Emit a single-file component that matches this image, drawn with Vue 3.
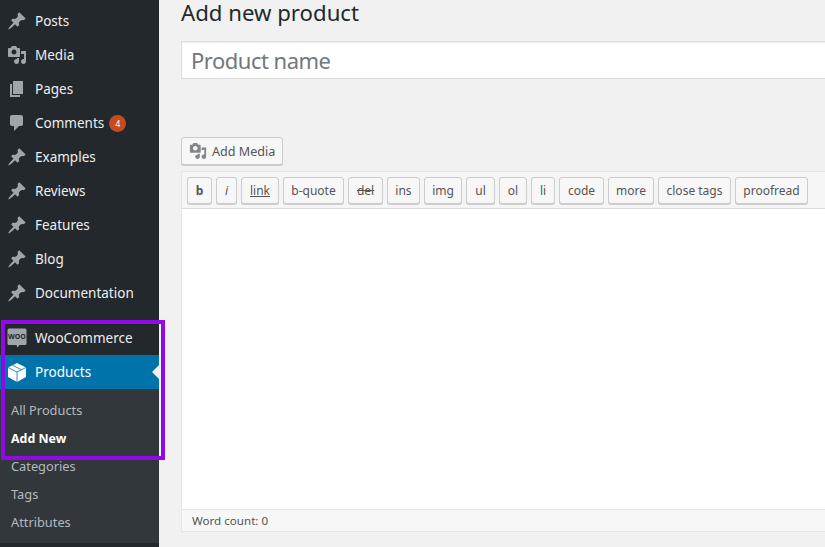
<script setup>
const items = [
  { label: 'Posts', icon: 'pin' }, { label: 'Media', icon: 'media' }, { label: 'Pages', icon: 'pages' },
  { label: 'Comments', icon: 'comment', badge: 4 }, { label: 'Examples', icon: 'pin' }, { label: 'Reviews', icon: 'pin' },
  { label: 'Features', icon: 'pin' }, { label: 'Blog', icon: 'pin' }, { label: 'Documentation', icon: 'pin' },
]
const sub = [
  { label: 'All Products' }, { label: 'Add New', current: true }, { label: 'Categories' }, { label: 'Tags' }, { label: 'Attributes' },
]
const tools = [
  { t: 'b', w: 25, c: 'bold' }, { t: 'i', w: 21, c: 'ital' }, { t: 'link', w: 38, c: 'under' }, { t: 'b-quote', w: 61 },
  { t: 'del', w: 35, c: 'strike' }, { t: 'ins', w: 33 }, { t: 'img', w: 38 }, { t: 'ul', w: 29 }, { t: 'ol', w: 28 },
  { t: 'li', w: 24 }, { t: 'code', w: 45 }, { t: 'more', w: 46 }, { t: 'close tags', w: 73 }, { t: 'proofread', w: 73 },
]
const mediaPath = 'M13 11V4c0-.55-.45-1-1-1h-1.670L9 1H5L3.670 3H2c-.55 0-1 .45-1 1v7c0 .55.45 1 1 1h10c.55 0 1-.45 1-1zM7 4.500c1.380 0 2.500 1.120 2.500 2.500S8.380 9.500 7 9.500 4.500 8.380 4.500 7 5.620 4.500 7 4.500zM14 6h5v10.500c0 1.380-1.120 2.500-2.500 2.500S14 17.880 14 16.500s1.120-2.500 2.500-2.500c.17 0 .34.020.5.050V9h-3V6zm-4 8.050V13h2v3.500c0 1.380-1.120 2.500-2.500 2.500S7 17.880 7 16.500 8.120 14 9.500 14c.17 0 .34.020.5.050z'
</script>

<template>
  <div class="page">
    <aside class="side">
      <ul class="menu">
        <li v-for="it in items" :key="it.label" class="item">
          <span class="ico">
            <svg v-if="it.icon === 'pin'" width="20" height="20" viewBox="0 0 20 20"><path d="M10.440 3.020l1.820-1.820 6.360 6.350-1.830 1.820c-1.050-.68-2.480-.57-3.410.36l-.75.75c-.92.93-1.040 2.350-.35 3.410l-1.830 1.820-2.410-2.410-2.800 2.790c-.42.42-3.380 2.710-3.800 2.290s1.860-3.390 2.280-3.810l2.790-2.790L4.100 9.360l1.830-1.820c1.050.69 2.480.57 3.400-.36l.75-.75c.93-.92 1.050-2.350.36-3.410z"/></svg>
            <svg v-else-if="it.icon === 'media'" width="20" height="20" viewBox="0 0 20 20"><path :d="mediaPath"/></svg>
            <svg v-else-if="it.icon === 'pages'" width="20" height="20" viewBox="0 0 20 20"><path d="M6 15V2h10v13H6zm-1 1h8v2H3V5h2v11z"/></svg>
            <svg v-else width="20" height="20" viewBox="0 0 20 20"><path d="M5 2h9c1.100 0 2 .9 2 2v7c0 1.100-.9 2-2 2h-2l-5 5v-5H5c-1.100 0-2-.9-2-2V4c0-1.100.9-2 2-2z"/></svg>
          </span>
          <span class="label">{{ it.label }}</span>
          <span v-if="it.badge" class="badge">{{ it.badge }}</span>
        </li>
      </ul>
      <div class="woo">
        <span class="ico">
          <svg width="20" height="20" viewBox="0 0 20 20"><path fill="#a0a5aa" d="M2 .5h16A1.500 1.500 0 0 1 19.500 2v13.500A1.500 1.500 0 0 1 18 17h-5.500L10.500 19.500 9.500 17H2A1.500 1.500 0 0 1 .5 15.500V2A1.500 1.500 0 0 1 2 .5z"/><text x="10" y="11.300" text-anchor="middle" class="wootext">WOO</text></svg>
        </span>
        <span class="label">WooCommerce</span>
      </div>
      <div class="prod">
        <span class="ico">
          <svg width="20" height="20" viewBox="0 0 20 20"><path fill="#fff" d="M10 1l9 4.500V15l-9 5-9-5V5.500z"/><path fill="none" stroke="#0073aa" stroke-width=".8" d="M1 5.500L10 10l9-4.500M10 10v10M5.500 3.200l9 4.600"/></svg>
        </span>
        <span class="label">Products</span>
        <i class="notch"></i>
      </div>
      <ul class="sub">
        <li v-for="s in sub" :key="s.label" :class="{ cur: s.current }">{{ s.label }}</li>
      </ul>
      <div class="frame"></div>
    </aside>
    <main class="main">
      <h1 class="title">Add new product</h1>
      <div class="name">Product name</div>
      <button class="media">
        <svg width="18" height="18" viewBox="0 0 20 20"><path fill="#82878c" :d="mediaPath"/></svg>
        Add Media
      </button>
      <div class="editor">
        <div class="toolbar">
          <button v-for="b in tools" :key="b.t" class="tool" :class="b.c" :style="{ width: b.w + 'px' }">{{ b.t }}</button>
        </div>
        <div class="area"></div>
        <div class="status">Word count: 0</div>
      </div>
    </main>
  </div>
</template>

<style>
html, body { margin: 0; background: #f1f1f1; overflow: hidden; }
</style>

<style scoped>
.page { display: flex; width: 825px; height: 547px; overflow: hidden; font-family: "Noto Sans", sans-serif; background: #f1f1f1; }
.side { position: relative; width: 159px; flex: none; background: #23282d; color: #eee; font-size: 13.500px; padding-top: 4px; box-sizing: border-box; }
ul { list-style: none; margin: 0; padding: 0; }
.item, .woo, .prod { display: flex; align-items: center; height: 34px; }
.label { padding-bottom: 1px; }
.ico { width: 35px; height: 20px; flex: none; display: flex; justify-content: center; padding-right: 1px; box-sizing: border-box; fill: #a0a5aa; }
.badge { margin-left: 5px; width: 17px; height: 17px; border-radius: 50%; background: #ca4a1f; color: #fff; font-size: 9px; display: flex; align-items: center; justify-content: center; }
.woo { margin-top: 11px; }
.wootext { font-size: 7px; font-weight: 700; fill: #23282d; }
.prod { position: relative; background: #0073aa; color: #fff; }
.notch { position: absolute; right: 0; top: 10px; border: 7px solid transparent; border-right-color: #f1f1f1; border-left-width: 0; }
.sub { background: #32373c; padding: 7px 0; color: #b4b9be; font-size: 12.800px; }
.sub li { height: 28px; line-height: 28px; padding-left: 11px; }
.sub .cur { color: #fff; font-weight: 700; font-size: 12.400px; line-height: 29px; }
.frame { position: absolute; left: 1px; top: 320px; width: 156px; height: 132px; border: 4px solid #8f0ae6; pointer-events: none; }
.main { flex: 1; min-width: 0; padding-left: 22px; }
.title { margin: 0; font-size: 22.200px; font-weight: 400; line-height: 26px; color: #23282d; }
.name { margin-top: 15px; width: 700px; height: 38px; line-height: 36px; box-sizing: border-box; border: 1px solid #ddd; background: #fff; padding-left: 9px; font-size: 22px; letter-spacing: -.5px; color: #72777c; box-shadow: inset 0 1px 2px rgba(0,0,0,.07); }
.media { display: flex; align-items: center; gap: 5px; margin-top: 58px; width: 102px; height: 28px; padding: 0 0 0 7px; border: 1px solid #ccc; border-radius: 3px; background: #f7f7f7; box-shadow: 0 1px 0 #ccc; color: #555; font: 12.600px "Noto Sans", sans-serif; box-sizing: border-box; }
.editor { margin-top: 6px; width: 700px; border: 1px solid #e5e5e5; box-sizing: border-box; background: #fff; }
.toolbar { display: flex; gap: 4px; height: 37px; padding: 5px 5px 0; box-sizing: border-box; background: #f5f5f5; border-bottom: 1px solid #ddd; }
.tool { height: 27px; padding: 0; border: 1px solid #ccc; border-radius: 3px; background: #f7f7f7; box-shadow: 0 1px 0 #ccc; color: #555; font: 12px "Noto Sans", sans-serif; box-sizing: border-box; }
.bold { font-weight: 700; }
.ital { font-style: italic; }
.under { text-decoration: underline; }
.strike { text-decoration: line-through; }
.area { height: 300px; background: #fff; }
.status { height: 22px; line-height: 22px; padding-left: 10px; background: #f7f7f7; border-top: 1px solid #e5e5e5; font-size: 11.600px; color: #555; box-sizing: border-box; }
</style>
